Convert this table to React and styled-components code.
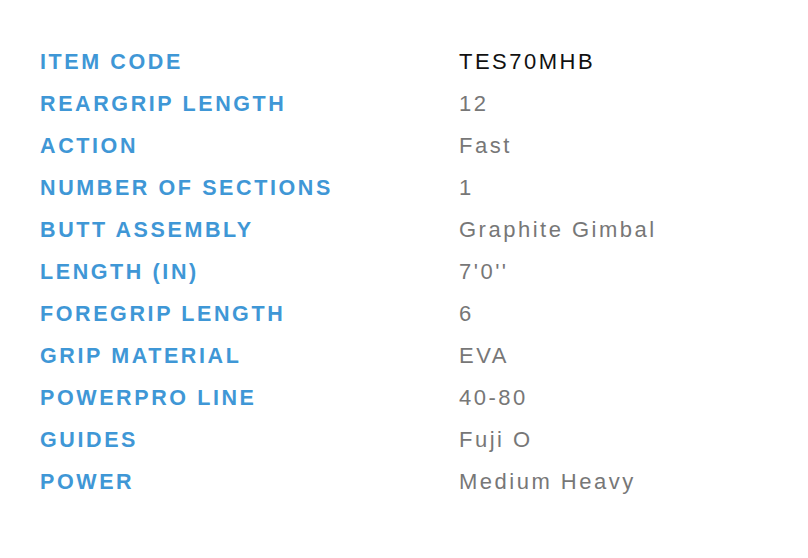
import React from "react";
import styled, { createGlobalStyle } from "styled-components";

const Global = createGlobalStyle`
  html, body { margin: 0; padding: 0; background: #fff; }
  body { font-family: "Liberation Sans", Arial, sans-serif; }
`;

const Table = styled.div`
  display: grid;
  grid-template-columns: 419px 1fr;
  padding: 41px 40px 0 40px;
`;

const Label = styled.div`
  font-family: "Liberation Sans", Arial, sans-serif;
  font-weight: 700;
  font-size: 21.5px;
  letter-spacing: 2.6px;
  text-transform: uppercase;
  color: #3f97d6;
  line-height: 42px;
  height: 42px;
  white-space: nowrap;
`;

const Value = styled.div`
  font-family: "Liberation Sans", Arial, sans-serif;
  font-weight: 400;
  font-size: 22px;
  letter-spacing: 2.5px;
  color: ${(p) => (p.$dark ? "#111" : "#777")};
  line-height: 42px;
  height: 42px;
  white-space: nowrap;
`;

const rows = [
  ["Item Code", "TES70MHB", true],
  ["Reargrip Length", "12"],
  ["Action", "Fast"],
  ["Number of Sections", "1"],
  ["Butt Assembly", "Graphite Gimbal"],
  ["Length (in)", "7'0''"],
  ["Foregrip Length", "6"],
  ["Grip Material", "EVA"],
  ["PowerPro Line", "40-80"],
  ["Guides", "Fuji O"],
  ["Power", "Medium Heavy"],
];

export default function App() {
  return (
    <>
      <Global />
      <Table>
        {rows.map(([l, v, d]) => (
          <React.Fragment key={l}>
            <Label>{l}</Label>
            <Value $dark={d}>{v}</Value>
          </React.Fragment>
        ))}
      </Table>
    </>
  );
}
